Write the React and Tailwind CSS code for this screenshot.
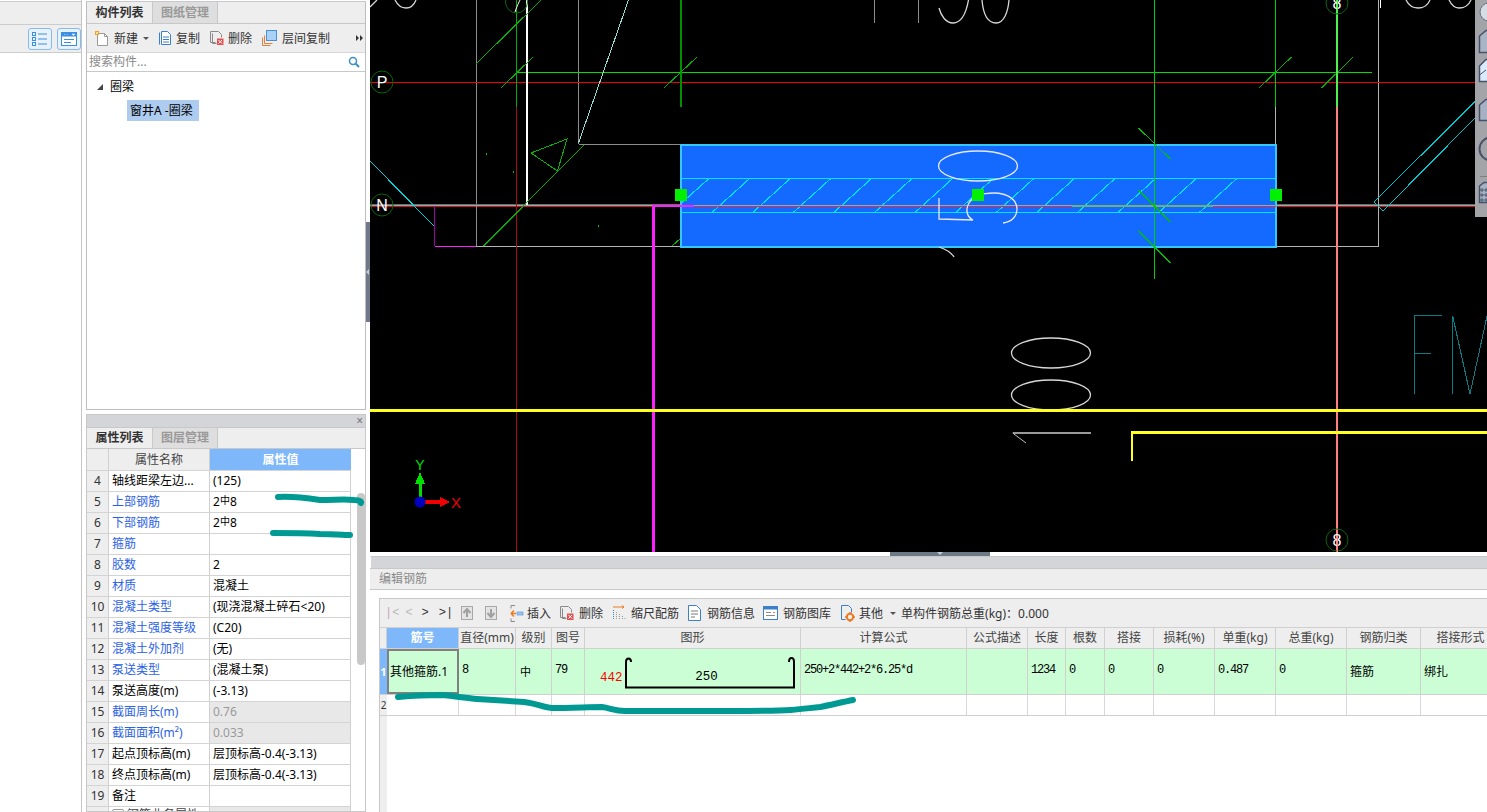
import React from "react";

const PROPS = [
  ["4", "轴线距梁左边...", "(125)", "k"],
  ["5", "上部钢筋", "bar", "b"],
  ["6", "下部钢筋", "bar", "b"],
  ["7", "箍筋", "", "b"],
  ["8", "胶数", "2", "b"],
  ["9", "材质", "混凝土", "b"],
  ["10", "混凝土类型", "(现浇混凝土碎石<20)", "b"],
  ["11", "混凝土强度等级", "(C20)", "b"],
  ["12", "混凝土外加剂", "(无)", "b"],
  ["13", "泵送类型", "(混凝土泵)", "b"],
  ["14", "泵送高度(m)", "(-3.13)", "k"],
  ["15", "截面周长(m)", "0.76", "d"],
  ["16", "截面面积(m²)", "0.033", "d"],
  ["17", "起点顶标高(m)", "层顶标高-0.4(-3.13)", "k"],
  ["18", "终点顶标高(m)", "层顶标高-0.4(-3.13)", "k"],
  ["19", "备注", "", "k"],
];

const COLS =
  "grid grid-cols-[7px_72px_57px_36px_33px_216px_166px_61px_38px_39px_49px_61px_61px_71px_74px_80px]";

const HEADERS = ["筋号", "直径(mm)", "级别", "图号", "图形", "计算公式", "公式描述", "长度", "根数", "搭接", "损耗(%)", "单重(kg)", "总重(kg)", "钢筋归类", "搭接形式"];

const MONO = "[font-family:'Liberation_Mono',monospace] text-[12px] tracking-[-1.2px]";

function IconNew() {
  return (
    <svg width="16" height="17" viewBox="0 0 16 17" fill="none">
      <path d="M3.5 3.5h7l3 3v9h-10z" fill="#fff" stroke="#9a9a9a" />
      <path d="M10.5 3.5v3h3" stroke="#9a9a9a" />
      <rect x="1" y="1" width="4" height="4" fill="#f0a030" />
      <rect x="2" y="2" width="2" height="2" fill="#ffe080" />
    </svg>
  );
}
function IconCopy() {
  return (
    <svg width="14" height="16" viewBox="0 0 14 16" fill="none">
      <path d="M1.5 2.5v12" stroke="#3d80c8" />
      <path d="M3.5 1.5h6l3 3v10h-9z" fill="#fff" stroke="#3d80c8" />
      <path d="M5 7h6M5 9.5h6M5 12h6" stroke="#3d80c8" />
    </svg>
  );
}
function IconDelete() {
  return (
    <svg width="15" height="16" viewBox="0 0 15 16" fill="none">
      <path d="M1.5 1.5h8l3 3v3M1.5 1.5v11h5" stroke="#8a8a8a" />
      <path d="M3.5 3.5v10h4" stroke="#8a8a8a" />
      <rect x="8" y="8.5" width="6.5" height="6.5" fill="#e25050" />
      <path d="M9.5 10l3.5 3.5M13 10l-3.5 3.5" stroke="#fff" />
    </svg>
  );
}
function IconFloorCopy() {
  return (
    <svg width="16" height="16" viewBox="0 0 16 16" fill="none">
      <path d="M3.5 5.5v8h8M1.5 7.5v8h8" stroke="#e0803a" />
      <rect x="5.5" y="0.5" width="10" height="10" fill="#a9d0f5" stroke="#4a8fd8" />
    </svg>
  );
}
function IconInsert() {
  return (
    <svg width="15" height="17" viewBox="0 0 15 17" fill="none">
      <path d="M2 .5h4M2 16.5h4M2 .5v3M2 13.5v3" stroke="#8a8a8a" />
      <path d="M7 8.5H2m0 0l3-3m-3 3l3 3" stroke="#ee7a20" strokeWidth="1.6" />
      <rect x="8" y="7" width="6" height="3" fill="#9cc8ee" stroke="#4a8fd8" strokeWidth=".6" />
    </svg>
  );
}
function IconScale() {
  return (
    <svg width="14" height="16" viewBox="0 0 14 16" fill="none">
      <path d="M2 1v2M3 2h9m-2-1.500l2 1.500-2 1.500" stroke="#ee7a20" />
      <path d="M1.500 5v10" stroke="#3d80c8" strokeDasharray="1 1" />
      <path d="M4.500 7v8M7.500 9v6M10.500 11v4M13 13v2" stroke="#9a9a9a" strokeDasharray="1 1" />
    </svg>
  );
}
function IconInfo() {
  return (
    <svg width="13" height="16" viewBox="0 0 13 16" fill="none">
      <path d="M.5.500h8l4 4v11H.5z" fill="#fff" stroke="#3d80c8" />
      <path d="M3 6h7M3 9h7M3 12h4" stroke="#7a7a7a" />
    </svg>
  );
}
function IconLibrary() {
  return (
    <svg width="15" height="14" viewBox="0 0 15 14" fill="none">
      <rect x=".5" y=".5" width="14" height="13" fill="#fff" stroke="#3d80c8" />
      <rect x=".5" y=".5" width="14" height="3" fill="#3d80c8" />
      <path d="M3 6.500h5M3 9.500h9" stroke="#8a8a8a" />
      <path d="M10 6.500h2" stroke="#e08040" />
    </svg>
  );
}
function IconOther() {
  return (
    <svg width="15" height="17" viewBox="0 0 15 17" fill="none">
      <path d="M1.500.500h7l3 3v4M1.500.500v14h4" stroke="#3d80c8" />
      <circle cx="10" cy="12" r="3.200" stroke="#ee7a20" strokeWidth="2" />
      <path d="M10 7v1.500M10 15.500V17M5 12h1.500M13.500 12H15" stroke="#ee7a20" strokeWidth="1.500" />
    </svg>
  );
}
function IconList() {
  return (
    <svg width="16" height="14" viewBox="0 0 16 14" fill="none">
      <rect x=".5" y=".5" width="3" height="3" stroke="#3d8ee0" />
      <rect x=".5" y="5.500" width="3" height="3" stroke="#3d8ee0" />
      <rect x=".5" y="10.500" width="3" height="3" stroke="#3d8ee0" />
      <path d="M6 2h9M6 7h9M6 12h9" stroke="#3d8ee0" />
    </svg>
  );
}
function IconWindow() {
  return (
    <svg width="16" height="14" viewBox="0 0 16 14" fill="none">
      <rect x=".5" y=".5" width="15" height="13" fill="#fff" stroke="#3d8ee0" />
      <rect x=".5" y=".5" width="15" height="4" fill="#3d8ee0" />
      <path d="M3 2.500h1M5.500 2.500h1M11 2h3l-1.500 1.500z" fill="#fff" stroke="#fff" strokeWidth=".5" />
      <path d="M3 7.500h10M3 10.500h7" stroke="#3d8ee0" />
    </svg>
  );
}
function IconSearch() {
  return (
    <svg width="12" height="12" viewBox="0 0 12 12" fill="none">
      <circle cx="5" cy="5" r="3.500" stroke="#3a8fc8" strokeWidth="1.500" />
      <path d="M7.500 7.500L11 11" stroke="#3a8fc8" strokeWidth="2" />
    </svg>
  );
}
function IconMore() {
  return (
    <svg width="7" height="6" viewBox="0 0 7 6">
      <path d="M0 0L3 3L0 6ZM4 0L7 3L4 6Z" fill="#333" />
    </svg>
  );
}
function BoxArrow({ down }) {
  return (
    <svg width="12" height="14" viewBox="0 0 12 14" fill="none">
      <rect x=".5" y=".5" width="11" height="13" fill="#e4e4e4" stroke="#a8a8a8" />
      <path d={down ? "M6 3v7M2.500 7L6 11l3.500-4" : "M6 11V4M2.500 7L6 3l3.500 4"} stroke="#a0a0a0" strokeWidth="2" />
    </svg>
  );
}

function Rebar() {
  return (
    <span className="flex items-center">
      2<span className="text-[10px] leading-none -mt-[4px]">中</span>8
    </span>
  );
}

function Canvas() {
  const hatch = [];
  for (let x = 709; x <= 1277; x += 40.6) {
    hatch.push(<line key={x} x1={x} y1={178.5} x2={Math.max(x - 37, 682)} y2={x - 37 < 682 ? 178.5 + (x - 682) * 0.89 : 212} />);
  }
  return (
    <svg className="block w-full h-full" viewBox="370 0 1117 552" fill="none" shapeRendering="crispEdges">
      <path d="M370 206.500H1475" stroke="#c01818" />
      <g stroke="#a4a4a4">
        <path d="M476.500 0V246M578.500 0V144M578.500 144.500H681" stroke="#8c8c8c" />
        <path d="M370 205.500H1475" />
        <path d="M874.500 0V23M918.500 0V23" stroke="#8c8c8c" />
      </g>
      <path d="M370 204.500H1475" stroke="#6c6c6c" />
      <path d="M476 246.500H681M1276 246.500H1378.500V0" stroke="#b4b4b4" />
      <path d="M1275.500 107V144" stroke="#b4b4b4" />
      <path d="M370 82.500H1475" stroke="#f00000" />
      <path d="M516.500 72.500H1372" stroke="#00e000" />
      <path d="M516.500 107V552" stroke="#a80c0c" />
      <path d="M527 0V205" stroke="#fff" strokeWidth="2" />
      <path d="M516.500 0V107" stroke="#00b000" />
      <path d="M681 0V107" stroke="#009000" strokeWidth="2" />
      <path d="M1275.500 0V107" stroke="#00d000" />
      <path d="M628.500 0L578.500 143" stroke="#8fe0d8" />
      <g stroke="#00b400">
        <path d="M476 64L541 0M501 88L533 57M664 88L697 57M1259 88L1291.500 57M1321.500 88L1353 57" />
        <path d="M584 145L483.500 246M567 139L531 153L557.500 171ZM672 246L681 238" />
      </g>
      <path d="M486 154h1M513 172h1M598 226h1" stroke="#00c000" strokeWidth="2" />
      <path d="M370 161L434 226" stroke="#00d8e0" />
      <path d="M434.500 206V246" stroke="#a000a0" />
      <path d="M434.500 246.500H476" stroke="#ff20ff" />
      <path d="M653.500 205V552" stroke="#ff20ff" strokeWidth="3" />
      <rect x="681" y="144.500" width="595" height="102" fill="#1469fe" stroke="#35c8ff" strokeWidth="2" />
      <path d="M681 178.500H1276M681 212.500H1276" stroke="#00e4f4" />
      <g stroke="#00dcf0" strokeWidth="1.200">{hatch}</g>
      <path d="M653 205.500H694" stroke="#ff20ff" strokeWidth="2" />
      <path d="M694 205.500H1276" stroke="#9aa4b4" />
      <path d="M694 206.500H1072M1213 206.500H1276" stroke="#d83040" />
      <path d="M1072 205.500H1213" stroke="#70b070" strokeWidth="2" />
      <path d="M1154.500 0V279" stroke="#00d000" />
      <path d="M1138.500 128L1170.500 159M1138.500 190L1170.500 222M1138.500 231L1170.500 263" stroke="#00c000" />
      <path d="M1337 0V107" stroke="#50f050" strokeWidth="2" />
      <path d="M1337 107V552" stroke="#ff8080" strokeWidth="2" />
      <g stroke="#e8e8f0" strokeWidth="1.300" shapeRendering="auto">
        <ellipse cx="978" cy="166" rx="39.500" ry="15" />
        <path d="M1003 223C1012 222 1017 216 1017 209C1017 200 1008 193 994 193C982 193 973 196 969 203C965 210 967 217 973 220L939 219V198" />
        <path d="M939 247C945 249 951 252 954 257" stroke="#ddd" />
      </g>
      <rect x="675" y="189" width="12" height="12" fill="#00f000" />
      <rect x="972" y="189" width="12" height="12" fill="#00f000" />
      <rect x="1270" y="189" width="12" height="12" fill="#00f000" />
      <g stroke="#d8d8d8" strokeWidth="1.300" shapeRendering="auto">
        <path d="M939 8C941 16 946 23 953 23C961 23 966 14 968.500 0M982 0C983 12 987 23 996 23C1004 23 1008 12 1009 0" />
        <path d="M395 0C398 6 402 8 406 8C410 8 414 5 416 0M370 7L377 0M1406 0C1409 6 1414 8 1418 8C1423 8 1428 5 1430 0M1449 0C1452 6 1456 8 1459 8C1464 8 1469 5 1471 0" />
        <ellipse cx="1051" cy="353" rx="39.500" ry="15" />
        <ellipse cx="1051" cy="395" rx="39.500" ry="15" />
      </g>
      <path d="M1380.500 0V8" stroke="#fff" />
      <path d="M1012.600 433H1091" stroke="#999" strokeWidth="2" />
      <path d="M1012.600 433L1026 443" stroke="#bbb" shapeRendering="auto" />
      <path d="M370 410.500H1487" stroke="#ffff20" strokeWidth="3" />
      <path d="M1132 432H1487" stroke="#ffff20" strokeWidth="3" />
      <path d="M1132 431V461" stroke="#ffff20" strokeWidth="2" />
      <path d="M1414.500 394V315.500H1442M1414.500 353H1431M1452.700 394V316L1470 394L1487 316" stroke="#0a7c84" />
      <path d="M1374 202L1475 101.700L1475 118L1383 211Z" stroke="#00c8d0" />
      <g stroke="#0c640c" shapeRendering="auto">
        <circle cx="382" cy="82" r="11" />
        <circle cx="382" cy="205" r="11" />
        <circle cx="516.500" cy="2" r="11" />
        <circle cx="1337" cy="3" r="11" />
        <circle cx="1337" cy="540" r="11" />
      </g>
      <g fill="#fff" textAnchor="middle" fontFamily="'Liberation Sans',sans-serif" fontSize="16" shapeRendering="auto">
        <text x="382" y="88">P</text>
        <text x="382" y="211">N</text>
        <text x="1337" y="546">8</text>
        <text x="1337" y="9">8</text>
      </g>
      <path d="M515 12C517 6 519 2 520 0" stroke="#fff" shapeRendering="auto" />
      <path d="M1337 536V552" stroke="#ff8080" />
      <path d="M1337 0V12" stroke="#50f050" />
      <path d="M420 498V480" stroke="#00e000" strokeWidth="3" />
      <path d="M420 472L425 484H415Z" fill="#00e000" />
      <path d="M424 502H441" stroke="#f00000" strokeWidth="4" />
      <path d="M450 502L440 497V507Z" fill="#f00000" />
      <ellipse cx="420" cy="502" rx="5.500" ry="5.500" fill="#0000c0" shapeRendering="auto" />
      <text x="420" y="470" textAnchor="middle" fill="#00e000" fontSize="14" fontFamily="'Liberation Sans',sans-serif" shapeRendering="auto">Y</text>
      <text x="456" y="508" textAnchor="middle" fill="#f00000" fontSize="15" fontFamily="'Liberation Sans',sans-serif" shapeRendering="auto">X</text>
    </svg>
  );
}

function ToolRail() {
  return (
    <div className="absolute right-0 top-0 w-[12px] h-[217px] bg-[#a3a4a7] overflow-hidden">
      <svg width="12" height="217" viewBox="1475 0 12 217" fill="none">
        <circle cx="1489" cy="12" r="9" fill="#d8dde4" stroke="#6a7486" strokeWidth="1" />
        <path d="M1479.500 36L1486 30.500H1490V52.500H1479.500Z" fill="#aab4c4" stroke="#46526a" strokeWidth="1.500" />
        <path d="M1479.500 66L1486 59.500H1490V81.500H1479.500Z" fill="#dcebfc" stroke="#46526a" strokeWidth="1.500" />
        <path d="M1479.500 75L1486 70" stroke="#46526a" />
        <path d="M1479.500 105L1486 99.500H1490V120.500H1479.500Z" fill="#a6b2c4" stroke="#46526a" strokeWidth="1.500" />
        <circle cx="1491" cy="149" r="11.500" stroke="#46526a" strokeWidth="2" />
        <path d="M1480 176.500H1490" stroke="#808080" />
        <path d="M1479.500 186L1484 182.500H1490V202.500H1479.500Z" fill="#a6b2c4" stroke="#46526a" strokeWidth="1.500" />
        <path d="M1481 189h2v2h-2zM1481 194h2v2h-2zM1481 199h2v2h-2zM1485 189h2v2h-2zM1485 194h2v2h-2zM1485 199h2v2h-2z" stroke="#2e3a50" strokeWidth=".7" />
      </svg>
    </div>
  );
}

function Tool({ icon, label, className = "" }) {
  return (
    <div className={"flex items-center " + className}>
      {icon}
      {label}
    </div>
  );
}

export default function App() {
  return (
    <div className="relative flex w-[1487px] h-[812px] overflow-hidden bg-white text-xs leading-none text-black [font-family:'Noto_Sans','Noto_Sans_CJK_SC',sans-serif]">
      {/* Left column */}
      <div className="w-[82px] shrink-0 flex flex-col border-r border-[#c4c4c4]">
        <div className="h-[24px] mt-px bg-[#eeeeee] border-t border-b border-[#cccccc]" />
        <div className="h-[28px] bg-[#eeeeee] border-b border-[#cccccc] flex items-center justify-end gap-[5px] pl-[28px]">
          <div className="w-[24px] h-[22px] rounded-[3px] border border-[#84bbf2] bg-[#e8f2fd] flex items-center justify-center"><IconList /></div>
          <div className="w-[24px] h-[22px] rounded-[3px] border border-[#84bbf2] bg-[#e8f2fd] flex items-center justify-center"><IconWindow /></div>
        </div>
      </div>

      {/* Middle column */}
      <div className="w-[280px] ml-[4px] shrink-0 flex flex-col">
        <div className="h-[409px] mt-px flex flex-col border border-[#bdbdbd] border-t-[#c8c8cc]">
          <div className="h-[22px] flex bg-[#eeeeee] border-b border-[#c8c8c8]">
            <div className="w-[65px] flex items-center justify-center font-bold text-[#333] pt-px">构件列表</div>
            <div className="w-[66px] flex items-center justify-center bg-[#dedede] text-[#999] font-bold border-x border-[#c8c8c8] pt-px">图纸管理</div>
          </div>
          <div className="h-[29px] bg-[#eeeeee] flex items-center pl-[7px] text-[#333] border-b border-[#d8d8d8]">
            <Tool icon={<IconNew />} label={<span className="ml-[4px] pt-[2px]">新建</span>} />
            <span className="ml-[5px] w-0 h-0 border-x-[3px] border-x-transparent border-t-[3px] border-t-[#555]" />
            <Tool className="ml-[9px]" icon={<IconCopy />} label={<span className="ml-[4px] pt-[2px]">复制</span>} />
            <Tool className="ml-[9px]" icon={<IconDelete />} label={<span className="ml-[4px] pt-[2px]">删除</span>} />
            <Tool className="ml-[9px]" icon={<IconFloorCopy />} label={<span className="ml-[5px] pt-[2px]">层间复制</span>} />
            <span className="ml-auto mr-[2px] flex"><IconMore /></span>
          </div>
          <div className="h-[19px] flex items-center justify-between pl-[2px] pr-[5px] border-b border-[#c8c8c8] text-[#8a8a8a]">
            <span>搜索构件...</span>
            <IconSearch />
          </div>
          <div className="flex-1 bg-white pt-px">
            <div className="h-[28px] flex items-center pl-[10px]">
              <span className="w-0 h-0 border-l-[6px] border-l-transparent border-b-[6px] border-b-[#444]" />
              <span className="ml-[7px]">圈梁</span>
            </div>
            <div className="ml-[40px] w-[72px] h-[21px] bg-[#aecbf0] flex items-center pl-[3px] -mt-[1px]">窗井A -圈梁</div>
          </div>
        </div>

        <div className="mt-[4px] flex-1 flex flex-col border border-[#c8c8c8] min-h-0">
          <div className="h-[12px] shrink-0 bg-[#d4d5d8] flex items-center justify-end pr-[2px] text-[12px] text-[#777]">×</div>
          <div className="h-[22px] shrink-0 flex bg-[#eeeeee] border-y border-[#c8c8c8]">
            <div className="w-[65px] flex items-center justify-center font-bold text-[#333]">属性列表</div>
            <div className="w-[66px] flex items-center justify-center bg-[#dedede] text-[#999] font-bold border-x border-[#c8c8c8]">图层管理</div>
          </div>
          <div className="flex flex-1 min-h-0">
            <div className="w-[264px] shrink-0 overflow-hidden">
              <div className="grid grid-cols-[22px_101px_141px] h-[22px] border-b border-[#d4d4d4] text-[#444]">
                <div className="bg-[#eeeeee] border-r border-[#d0d0d0]" />
                <div className="bg-[#eeeeee] border-r border-[#d0d0d0] flex items-center justify-center">属性名称</div>
                <div className="bg-[#7eb8fb] flex items-center justify-center text-white font-bold">属性值</div>
              </div>
              {PROPS.map(([n, name, val, kind]) => (
                <div key={n} className="grid grid-cols-[22px_101px_141px] h-[21px] border-b border-[#d4d4d4]">
                  <div className="bg-[#eeeeee] border-r border-[#d0d0d0] flex items-center justify-center text-[#333]">{n}</div>
                  <div className={"border-r border-[#d0d0d0] flex items-center pl-[3px] whitespace-nowrap " + (kind === "k" ? "text-black" : "text-[#2b62e3]")}>{name}</div>
                  <div className={"flex items-center pl-[3px] whitespace-nowrap border-r border-[#d0d0d0] " + (kind === "d" ? "bg-[#e8e8e8] text-[#9a9a9a]" : "text-black")}>
                    {val === "bar" ? <Rebar /> : val}
                  </div>
                </div>
              ))}
              <div className="grid grid-cols-[22px_101px_141px] h-[21px]">
                <div className="bg-[#eeeeee] border-r border-[#d0d0d0]" />
                <div className="border-r border-[#d0d0d0] flex items-start pl-[3px] pt-[2px] gap-[3px] whitespace-nowrap text-[#444]">
                  <span className="w-[12px] h-[12px] border border-[#999] rounded-[2px] bg-white" />
                  钢筋业务属性
                </div>
                <div className="bg-[#e8e8e8] border-r border-[#d0d0d0]" />
              </div>
            </div>
            <div className="flex-1 pl-[6px]">
              <div className="mt-[44px] w-[8px] h-[172px] rounded-[4px] bg-[#c8c8c8]" />
            </div>
          </div>
        </div>
      </div>

      {/* Right column */}
      <div className="flex-1 min-w-0 flex flex-col">
        <div className="h-[552px] flex shrink-0">
          <div className="w-[4px] shrink-0 flex items-center pb-[8px] bg-white">
            <div className="w-[4px] h-[100px] bg-[#6e7a87] flex items-center">
              <span className="w-0 h-0 border-y-[3px] border-y-transparent border-r-[3px] border-r-[#c4ccd4]" />
            </div>
          </div>
          <div className="relative flex-1 min-w-0 bg-black overflow-hidden">
            <Canvas />
            <ToolRail />
          </div>
        </div>
        <div className="h-[4px] shrink-0 bg-white pl-[524px]">
          <div className="w-[100px] h-[4px] bg-[#6e7a87] flex justify-center">
            <span className="w-0 h-0 border-x-[3px] border-x-transparent border-t-[3px] border-t-[#c4ccd4]" />
          </div>
        </div>

        <div className="flex-1 min-h-0 pl-[4px] flex flex-col">
          <div className="h-[12px] shrink-0 bg-[#d4d5d8] border-t border-[#c8c8cc] border-l border-l-white" />
          <div className="h-[22px] shrink-0 bg-[#eeeeee] border-y border-[#c8c8c8] flex items-center pl-[9px] text-[#8a8a8a]">编辑钢筋</div>
          <div className="flex-1 min-h-0 pl-[9px] pt-[8px]">
            <div className="h-full border-l border-t border-[#c8c8c8] flex flex-col">
              <div className="h-[28px] shrink-0 bg-[#eeeeee] flex items-center text-[#333] whitespace-nowrap">
                <div className="w-[81px] flex items-center pl-[5px] text-[12px] [font-family:'Liberation_Mono',monospace]">
                  <span className="text-[#bbb]"><span className="text-[#c8a8b8]">|</span>&lt;</span>
                  <span className="ml-[6px] text-[#bbb]">&lt;</span>
                  <span className="ml-[9px]">&gt;</span>
                  <span className="ml-[10px]">&gt;|</span>
                </div>
                <BoxArrow />
                <span className="w-[12px]" />
                <BoxArrow down />
                <Tool className="ml-[12px]" icon={<IconInsert />} label={<span className="ml-[3px] pt-px">插入</span>} />
                <Tool className="ml-[8px]" icon={<IconDelete />} label={<span className="ml-[5px] pt-px">删除</span>} />
                <Tool className="ml-[9px]" icon={<IconScale />} label={<span className="ml-[5px] pt-px">缩尺配筋</span>} />
                <Tool className="ml-[9px]" icon={<IconInfo />} label={<span className="ml-[6px] pt-px">钢筋信息</span>} />
                <Tool className="ml-[8px]" icon={<IconLibrary />} label={<span className="ml-[5px] pt-px">钢筋图库</span>} />
                <Tool className="ml-[9px]" icon={<IconOther />} label={<span className="ml-[4px] pt-px">其他</span>} />
                <span className="ml-[7px] w-0 h-0 border-x-[3px] border-x-transparent border-t-[3px] border-t-[#555]" />
                <span className="ml-[5px] pt-px">单构件钢筋总重(kg)：0.000</span>
              </div>
              <div className={COLS + " h-[22px] shrink-0 w-[1200px] border-y border-[#d0d0d0] bg-[#eeeeee] text-[#444]"}>
                <div className="border-r border-[#d0d0d0]" />
                {HEADERS.map((h, i) => (
                  <div key={h} className={"flex items-center justify-center border-r border-[#d0d0d0] whitespace-nowrap " + (i === 0 ? "bg-[#7eb8fb] text-white font-bold" : "")}>{h}</div>
                ))}
              </div>
              <div className={COLS + " h-[46px] shrink-0 w-[1200px] border-b border-[#d0d0d0] bg-[#ccfed6]"}>
                <div className="bg-[#7eb8fb] text-white font-bold flex items-center justify-center text-[11px]">1</div>
                <div className="border-2 border-[#808080] flex items-center pl-[1px] whitespace-nowrap">其他箍筋.1</div>
                <div className={"border-r border-[#d0d0d0] flex items-center pl-[3px] pb-[3px] " + MONO}>8</div>
                <div className="border-r border-[#d0d0d0] flex items-center pl-[4px] text-[11px]">中</div>
                <div className={"border-r border-[#d0d0d0] flex items-center pl-[3px] pb-[3px] " + MONO}>79</div>
                <div className="border-r border-[#d0d0d0] flex items-start pl-[15px] pt-[8px]">
                  <span className="mt-[15px] text-[12.5px] leading-none text-[#ff0000] [font-family:'Liberation_Mono',monospace]">442</span>
                  <div className="relative ml-[2px] w-[170px] h-[32px]">
                    <svg className="absolute inset-0" width="170" height="32" viewBox="0 0 170 32" fill="none">
                      <path d="M6 5C6 2 5 1.500 3.500 1.500C2 1.500 1 2.500 1 5V30.500H169V5C169 2.500 168 1 166.500 1C165 1 164 2 164 5" stroke="#000" strokeWidth="2" />
                    </svg>
                    <span className="absolute inset-x-0 top-[14px] pr-[6px] text-center text-[12.5px] leading-none [font-family:'Liberation_Mono',monospace]">250</span>
                  </div>
                </div>
                <div className={"border-r border-[#d0d0d0] flex items-center pl-[3px] pb-[3px] whitespace-nowrap " + MONO}>250+2*442+2*6.25*d</div>
                <div className="border-r border-[#d0d0d0]" />
                <div className={"border-r border-[#d0d0d0] flex items-center pl-[3px] pb-[3px] " + MONO}>1234</div>
                <div className={"border-r border-[#d0d0d0] flex items-center pl-[3px] pb-[3px] " + MONO}>0</div>
                <div className={"border-r border-[#d0d0d0] flex items-center pl-[3px] pb-[3px] " + MONO}>0</div>
                <div className={"border-r border-[#d0d0d0] flex items-center pl-[3px] pb-[3px] " + MONO}>0</div>
                <div className={"border-r border-[#d0d0d0] flex items-center pl-[3px] pb-[3px] " + MONO}>0.487</div>
                <div className={"border-r border-[#d0d0d0] flex items-center pl-[3px] pb-[3px] " + MONO}>0</div>
                <div className="border-r border-[#d0d0d0] flex items-center pl-[3px]">箍筋</div>
                <div className="border-r border-[#d0d0d0] flex items-center pl-[3px]">绑扎</div>
              </div>
              <div className={COLS + " h-[21px] shrink-0 w-[1200px] border-b border-[#d0d0d0]"}>
                <div className="bg-[#eeeeee] flex items-center justify-center text-[10px] text-[#333]">2</div>
                {HEADERS.map((h) => (
                  <div key={h} className="border-r border-[#d8d8d8]" />
                ))}
              </div>
              <div className="flex-1 w-[7px] bg-[#eeeeee]" />
            </div>
          </div>
        </div>
      </div>

      {/* Hand-drawn marks on top of the screenshot */}
      <svg className="absolute inset-0 pointer-events-none" width="1487" height="812" viewBox="0 0 1487 812" fill="none" stroke="#009a93" strokeWidth="6" strokeLinecap="round" strokeLinejoin="round">
        <path d="M278 497C290 496 300 497 320 500C335 500 345 499 354 500C358 500 362 501 361 503" />
        <path d="M273 533C290 533 303 533 320 534C335 534 345 535 350 535" />
        <path d="M398 697C410 696 430 695 441 695C455 696 465 698 477 699C495 700 510 701 524 702C535 703 545 708 552 708C570 708 590 707 602 707C610 708 615 711 625 711C660 711 700 711 727 711C750 711 775 711 791 710C803 709 810 708 820 707C830 705 843 702 853 700" />
      </svg>
    </div>
  );
}
